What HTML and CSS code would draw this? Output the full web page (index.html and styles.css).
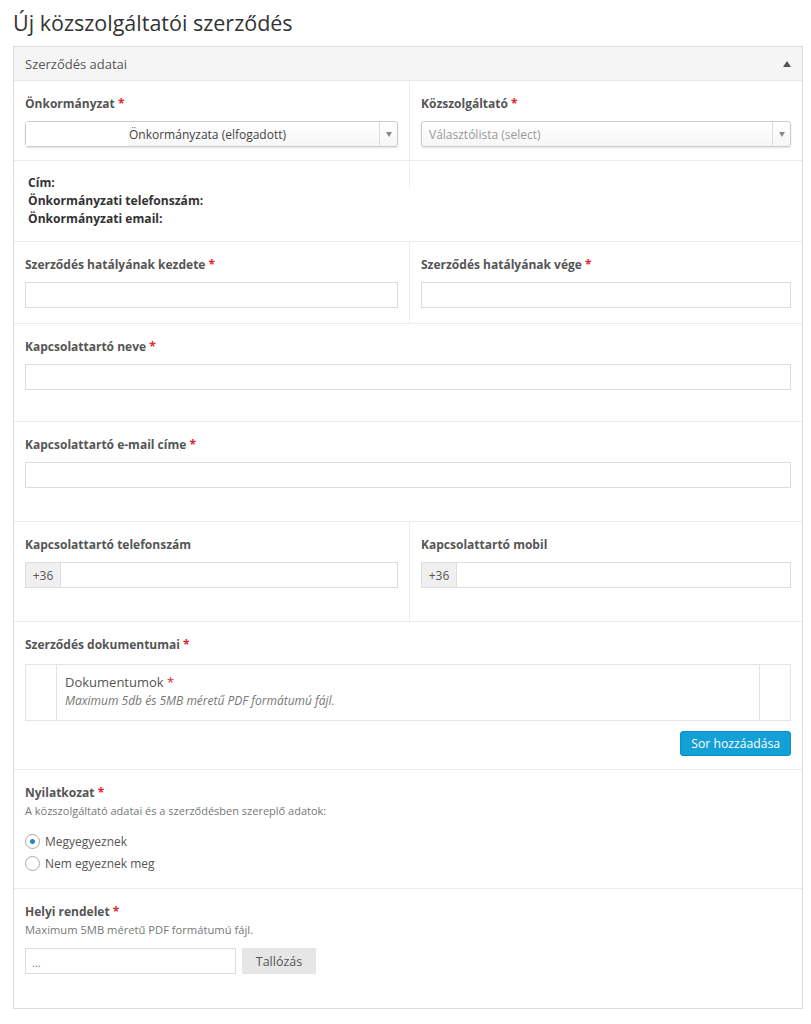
FILE: index.html
```html
<!DOCTYPE html>
<html lang="hu">
<head>
<meta charset="utf-8">
<title>Új közszolgáltatói szerződés</title>
<link rel="stylesheet" href="styles.css">
</head>
<body>
<h1 class="page-title">Új közszolgáltatói szerződés</h1>
<div class="panel">
  <div class="panel-head">
    <span>Szerződés adatai</span>
    <span class="caret-up"></span>
  </div>

  <div class="row two">
    <div class="cell">
      <div class="label">Önkormányzat <span class="req">*</span></div>
      <div class="select">
        <span class="select-text centered">Önkormányzata (elfogadott)</span>
        <span class="select-arrow"><span class="tri-down"></span></span>
      </div>
    </div>
    <div class="cell divider">
      <div class="label">Közszolgáltató <span class="req">*</span></div>
      <div class="select">
        <span class="select-text placeholder">Választólista (select)</span>
        <span class="select-arrow"><span class="tri-down"></span></span>
      </div>
    </div>
  </div>

  <div class="row two">
    <div class="cell info">
      <div>Cím:</div>
      <div>Önkormányzati telefonszám:</div>
      <div>Önkormányzati email:</div>
    </div>
    <div class="cell divider stub"></div>
  </div>

  <div class="row two">
    <div class="cell pad-b-16">
      <div class="label">Szerződés hatályának kezdete <span class="req">*</span></div>
      <div class="input"></div>
    </div>
    <div class="cell divider pad-b-16">
      <div class="label">Szerződés hatályának vége <span class="req">*</span></div>
      <div class="input"></div>
    </div>
  </div>

  <div class="row">
    <div class="cell pad-b-32">
      <div class="label">Kapcsolattartó neve <span class="req">*</span></div>
      <div class="input"></div>
    </div>
  </div>

  <div class="row">
    <div class="cell pad-b-34">
      <div class="label">Kapcsolattartó e-mail címe <span class="req">*</span></div>
      <div class="input"></div>
    </div>
  </div>

  <div class="row two">
    <div class="cell pad-b-34">
      <div class="label">Kapcsolattartó telefonszám</div>
      <div class="input group"><span class="addon">+36</span></div>
    </div>
    <div class="cell divider pad-b-34">
      <div class="label">Kapcsolattartó mobil</div>
      <div class="input group"><span class="addon">+36</span></div>
    </div>
  </div>

  <div class="row">
    <div class="cell">
      <div class="label">Szerződés dokumentumai <span class="req">*</span></div>
      <div class="doc-table">
        <div class="doc-side"></div>
        <div class="doc-main">
          <div class="doc-title">Dokumentumok <span class="req">*</span></div>
          <div class="doc-hint">Maximum 5db és 5MB méretű PDF formátumú fájl.</div>
        </div>
        <div class="doc-side"></div>
      </div>
      <div class="actions">
        <button class="btn-primary" type="button">Sor hozzáadása</button>
      </div>
    </div>
  </div>

  <div class="row">
    <div class="cell pad-b-15">
      <div class="label">Nyilatkozat <span class="req">*</span></div>
      <div class="help">A közszolgáltató adatai és a szerződésben szereplő adatok:</div>
      <div class="radios">
        <div class="radio"><span class="radio-dot checked"></span>Megyegyeznek</div>
        <div class="radio"><span class="radio-dot"></span>Nem egyeznek meg</div>
      </div>
    </div>
  </div>

  <div class="row last">
    <div class="cell pad-b-35">
      <div class="label">Helyi rendelet <span class="req">*</span></div>
      <div class="help wide">Maximum 5MB méretű PDF formátumú fájl.</div>
      <div class="file">
        <div class="file-name">...</div>
        <button class="btn-browse" type="button">Tallózás</button>
      </div>
    </div>
  </div>
</div>
</body>
</html>
```
FILE: styles.css
```css
* { box-sizing: border-box; }

body {
  margin: 0;
  padding: 0 8px 0 13px;
  font-family: "Open Sans", "Liberation Sans", sans-serif;
  color: #555;
  background: #fff;
}

.page-title {
  margin: 8px 0 8px 0;
  font-size: 21.5px;
  line-height: 30px;
  font-weight: 400;
  color: #333;
}

.panel {
  width: 790px;
  border: 1px solid #ddd;
  background: #fff;
}

.panel-head {
  height: 34px;
  display: flex;
  align-items: center;
  justify-content: space-between;
  padding: 0 11px;
  background: #f5f5f5;
  border-bottom: 1px solid #e8e8e8;
  font-size: 13px;
  color: #555;
}

.caret-up {
  width: 0;
  height: 0;
  border-left: 4px solid transparent;
  border-right: 4px solid transparent;
  border-bottom: 6px solid #555;
}

.row {
  border-bottom: 1px solid #ececec;
}
.row.last { border-bottom: 0; }

.row.two {
  display: grid;
  grid-template-columns: 395px 1fr;
}

.cell {
  padding: 13px 11px 13px 11px;
}
.cell.pad-b-15 { padding-bottom: 14px; }
.cell.pad-b-16 { padding-bottom: 15px; }
.cell.pad-b-32 { padding-bottom: 31px; }
.cell.pad-b-34 { padding-bottom: 33px; }
.cell.pad-b-35 { padding-bottom: 34px; }

.cell.divider { border-left: 1px solid #ececec; }
.cell.stub { align-self: start; height: 27px; padding: 0; }

.label {
  font-size: 12px;
  line-height: 20px;
  font-weight: 700;
  color: #555;
  margin-bottom: 7px;
}
.req { color: #e0242b; font-weight: 700; }

.info {
  padding-left: 14px;
  font-size: 12.1px;
  line-height: 18px;
  font-weight: 700;
  color: #333;
}

.select {
  height: 26px;
  display: flex;
  border: 1px solid #ccc;
  border-radius: 3px;
  background: linear-gradient(#fff, #f6f6f6);
  box-shadow: 0 1px 2px rgba(0,0,0,0.12);
  font-size: 12px;
}
.select-text {
  flex: 1;
  display: flex;
  align-items: center;
  padding-left: 7px;
  color: #444;
}
.select-text.centered {
  padding-left: 103px;
  background: linear-gradient(90deg, #fff 0, #fff 102px, transparent 102px);
}
.select-text.placeholder { color: #999; }
.select-arrow {
  width: 18px;
  border-left: 1px solid #ddd;
  display: flex;
  align-items: center;
  justify-content: center;
}
.tri-down {
  width: 0;
  height: 0;
  border-left: 3px solid transparent;
  border-right: 3px solid transparent;
  border-top: 5px solid #888;
}

.input {
  height: 26px;
  border: 1px solid #ddd;
  background: #fff;
}
.input.group { display: flex; }
.addon {
  width: 35px;
  background: #f0f0f0;
  border-right: 1px solid #ddd;
  display: flex;
  align-items: center;
  justify-content: center;
  font-size: 12px;
  color: #555;
}

.doc-table {
  margin-top: 9px;
  height: 57px;
  display: flex;
  border: 1px solid #e5e5e5;
}
.doc-side { width: 31px; }
.doc-side:first-child { border-right: 1px solid #e5e5e5; }
.doc-side:last-child { border-left: 1px solid #e5e5e5; }
.doc-main {
  flex: 1;
  padding: 7px 8px 0 8px;
}
.doc-title {
  font-size: 13px;
  line-height: 20px;
  color: #555;
}
.doc-title .req { font-weight: 400; }
.doc-hint {
  font-size: 12px;
  line-height: 17px;
  font-style: italic;
  color: #777;
}

.actions {
  display: flex;
  justify-content: flex-end;
  margin-top: 10px;
}
.btn-primary {
  height: 25px;
  padding: 0 10px;
  border: 1px solid #0a8fc0;
  border-radius: 3px;
  background: #13a0d7;
  color: #fff;
  font-family: inherit;
  font-size: 12.2px;
}

.help {
  font-size: 11px;
  line-height: 16px;
  color: #777;
  margin-top: -7px;
}
.help.wide { font-size: 11.2px; }

.radios { margin-top: 11px; }
.radio {
  display: flex;
  align-items: center;
  height: 22px;
  font-size: 12px;
  color: #555;
}
.radio-dot {
  width: 15px;
  height: 15px;
  border: 1px solid #aaa;
  border-radius: 50%;
  margin-right: 5px;
  display: flex;
  align-items: center;
  justify-content: center;
  background: #fff;
}
.radio-dot.checked::after {
  content: "";
  width: 5px;
  height: 5px;
  border-radius: 50%;
  background: #1e8bc3;
}

.file {
  display: flex;
  gap: 6px;
  margin-top: 10px;
}
.file-name {
  width: 211px;
  height: 26px;
  border: 1px solid #ddd;
  font-size: 11px;
  color: #777;
  padding: 6px 0 0 6px;
}
.btn-browse {
  width: 74px;
  height: 26px;
  border: 0;
  background: #e6e6e6;
  color: #555;
  font-family: inherit;
  font-size: 12.5px;
}
```
